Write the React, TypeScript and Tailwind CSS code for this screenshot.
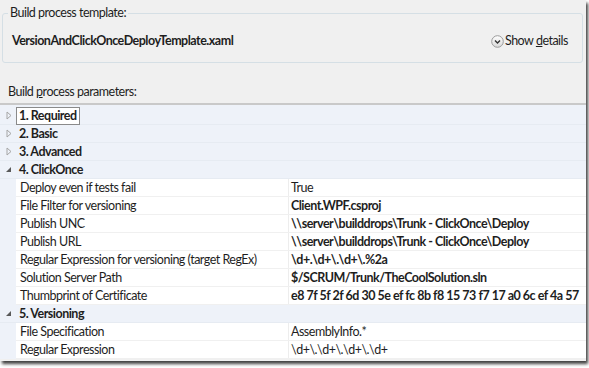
import React from "react";

type Prop = { name: string; value: string; bold?: boolean };
type Group = { title: string; open: boolean; focused?: boolean; props?: Prop[] };

const groups: Group[] = [
  { title: "1. Required", open: false, focused: true },
  { title: "2. Basic", open: false },
  { title: "3. Advanced", open: false },
  {
    title: "4. ClickOnce",
    open: true,
    props: [
      { name: "Deploy even if tests fail", value: "True" },
      { name: "File Filter for versioning", value: "Client.WPF.csproj", bold: true },
      { name: "Publish UNC", value: "\\\\server\\builddrops\\Trunk - ClickOnce\\Deploy", bold: true },
      { name: "Publish URL", value: "\\\\server\\builddrops\\Trunk - ClickOnce\\Deploy", bold: true },
      { name: "Regular Expression for versioning (target RegEx)", value: "\\d+.\\d+\\.\\d+\\.%2a", bold: true },
      { name: "Solution Server Path", value: "$/SCRUM/Trunk/TheCoolSolution.sln", bold: true },
      { name: "Thumbprint of Certificate", value: "e8 7f 5f 2f 6d 30 5e ef fc 8b f8 15 73 f7 17 a0 6c ef 4a 57", bold: true },
    ],
  },
  {
    title: "5. Versioning",
    open: true,
    props: [
      { name: "File Specification", value: "AssemblyInfo.*" },
      { name: "Regular Expression", value: "\\d+\\.\\d+\\.\\d+\\.\\d+" },
    ],
  },
];

function Triangle({ open }: { open: boolean }) {
  if (open) {
    return (
      <svg width="8" height="8" viewBox="0 0 8 8">
        <path d="M6 1 L6 6 L1 6 Z" fill="#595959" />
      </svg>
    );
  }
  return (
    <svg width="8" height="9" viewBox="0 0 8 9">
      <path d="M2 1 L6 4.5 L2 8 Z" fill="none" stroke="#a6a6a6" strokeWidth="1" />
    </svg>
  );
}

function ChevronCircle() {
  return (
    <svg width="13" height="13" viewBox="0 0 13 13">
      <defs>
        <linearGradient id="cc" x1="0" y1="0" x2="0" y2="1">
          <stop offset="0" stopColor="#ffffff" />
          <stop offset="1" stopColor="#d9d9d9" />
        </linearGradient>
      </defs>
      <circle cx="6.5" cy="6.5" r="5.8" fill="url(#cc)" stroke="#9a9a9a" strokeWidth="1" />
      <path d="M4 5.5 L6.5 8 L9 5.5" fill="none" stroke="#333" strokeWidth="1.4" />
    </svg>
  );
}

export default function App() {
  return (
    <div className="w-[589px] h-[368px] bg-white" style={{ fontFamily: 'Lato, "Liberation Sans", sans-serif' }}>
      <div className="w-[586px] h-[361px] bg-[#f0f0f0] shadow-[2px_3px_3px_rgba(0,0,0,0.75)] pt-[13px] text-[12.5px] tracking-[-0.5px] text-[#1e1e1e]">
        {/* template group box */}
        <div className="relative ml-[2px] mr-[3px] h-[50px] border border-[#d5dfe5] rounded-[3px]">
          <span className="absolute -top-[9px] left-[5px] px-[2px] bg-[#f0f0f0] leading-[16px]">
            Build process template:
          </span>
          <div className="flex items-center justify-between pl-[9px] pr-[14px] pt-[19px]">
            <span className="font-bold leading-[16px]">VersionAndClickOnceDeployTemplate.xaml</span>
            <span className="flex items-center gap-[1px] leading-[16px]">
              <ChevronCircle />
              <span>
                Show <span className="underline">d</span>etails
              </span>
            </span>
          </div>
        </div>

        <div className="mt-[21px] pl-[8px] leading-[16px]">
          Build <span className="underline">p</span>rocess parameters:
        </div>

        {/* property grid */}
        <div className="mt-[3px] border-t-2 border-[#c9c9c9] bg-[#eef2f9] pt-[2px]">
          {groups.map((g) => (
            <div key={g.title}>
              <div className="flex items-center h-[18px] border-b border-[#e6ebf2]">
                <span className="w-[18px] pl-[5px] flex">
                  <Triangle open={g.open} />
                </span>
                <span
                  className={`font-bold leading-[16px] px-[2px] -ml-[2px] ${
                    g.focused ? "border border-[#8a8a8a] bg-white" : "border border-transparent"
                  }`}
                >
                  {g.title}
                </span>
              </div>
              {g.open &&
                g.props?.map((p) => (
                  <div key={p.name} className="flex h-[18px] ml-[16px] bg-white border-b border-[#f0f0f0]">
                    <div className="w-[273px] border-r border-[#ededed] pl-[4px] leading-[17px] truncate">
                      {p.name}
                    </div>
                    <div className={`flex-1 pl-[2px] leading-[17px] whitespace-nowrap overflow-hidden ${p.bold ? "font-bold" : ""}`}>
                      {p.value}
                    </div>
                  </div>
                ))}
            </div>
          ))}
        </div>
      </div>
    </div>
  );
}
